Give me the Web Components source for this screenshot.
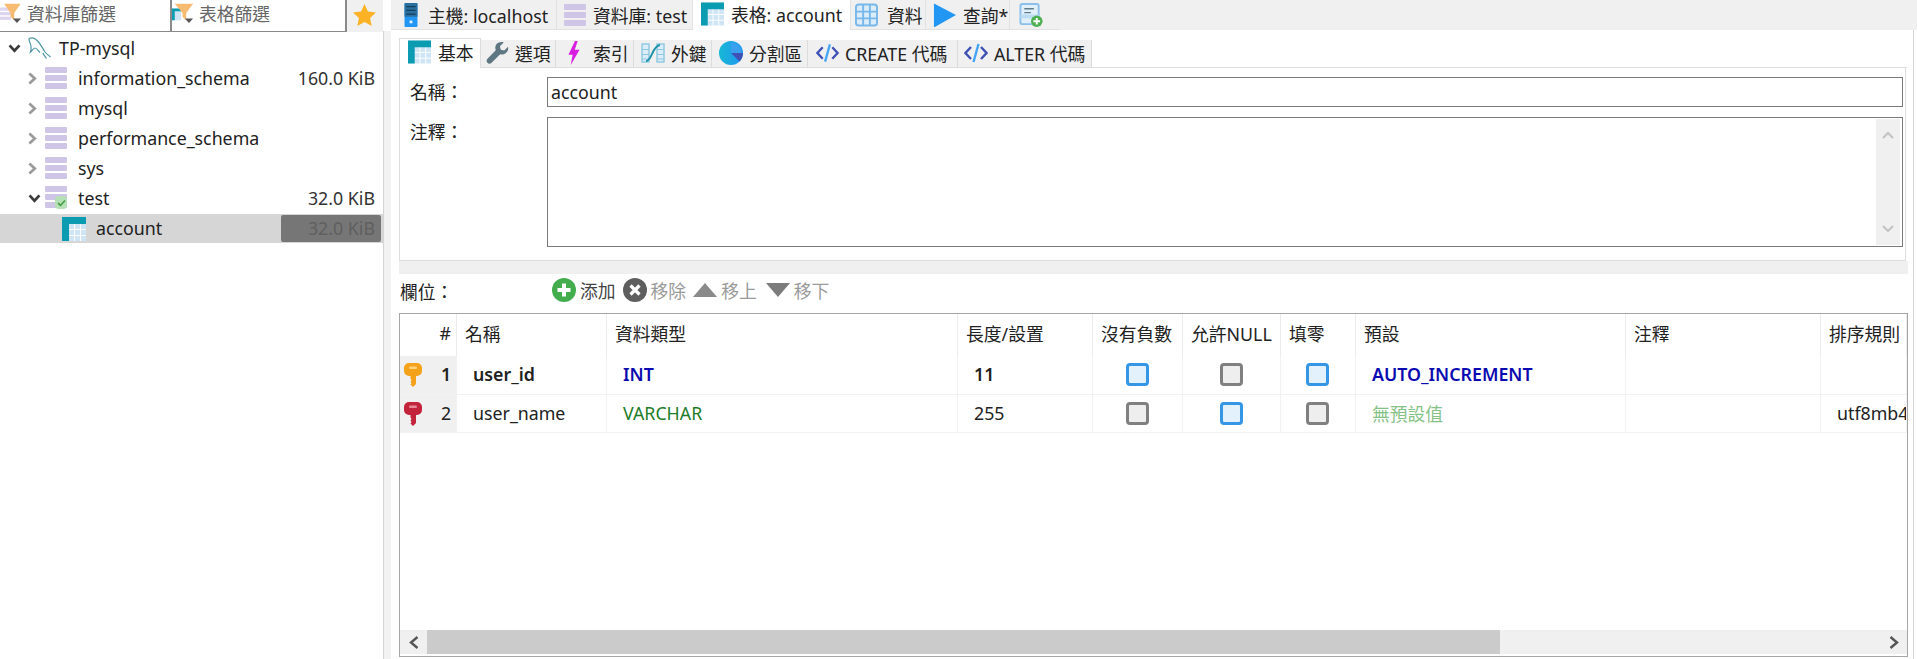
<!DOCTYPE html>
<html lang="zh-Hant">
<head>
<meta charset="utf-8">
<title>HeidiSQL</title>
<style>
    html, body { margin: 0; height: 100%; overflow: hidden; background: #fff; }
    body {
        font: 17.8px "Noto Sans", "Noto Sans CJK TC", sans-serif;
        color: #222;
    }
</style>
</head>
<body>
<app-shell>
    <side-panel slot="side">
        <filter-tab slot="tabs" icon="filterDb" style="--w:172px">資料庫篩選</filter-tab>
        <filter-tab slot="tabs" icon="filterTable" style="--w:175px">表格篩選</filter-tab>
        <tree-row chevron="open" icon="dolphin" level="0">TP-mysql</tree-row>
        <tree-row chevron="closed" icon="db" level="1" size="160.0 KiB">information_schema</tree-row>
        <tree-row chevron="closed" icon="db" level="1">mysql</tree-row>
        <tree-row chevron="closed" icon="db" level="1">performance_schema</tree-row>
        <tree-row chevron="closed" icon="db" level="1">sys</tree-row>
        <tree-row chevron="open" icon="dbCheck" level="1" size="32.0 KiB">test</tree-row>
        <tree-row icon="table" level="2" size="32.0 KiB" selected>account</tree-row>
    </side-panel>
    <main-panel slot="main">
        <tab-item slot="tabs" icon="server" style="--w:166px;--pad:13px;--gap:10px;--iw:14px">主機: localhost</tab-item>
        <tab-item slot="tabs" icon="db" style="--w:136px;--pad:7px;--gap:7px;--iw:22px">資料庫: test</tab-item>
        <tab-item slot="tabs" icon="table" active style="--w:158px;--pad:8px;--gap:7px;--iw:23px">表格: account</tab-item>
        <tab-item slot="tabs" icon="grid" style="--w:75px;--pad:4px;--gap:9px;--iw:23px">資料</tab-item>
        <tab-item slot="tabs" icon="play" style="--w:84px;--pad:7px;--gap:7px;--iw:23px">查詢*</tab-item>
        <tab-item slot="tabs" icon="queryAdd" plain style="--w:50px;--pad:9px;--gap:0px;--iw:24px"></tab-item>

        <tab-item slot="subtabs" icon="table" active sub style="--w:82px;--pad:8px;--gap:7px;--iw:23px">基本</tab-item>
        <tab-item slot="subtabs" icon="wrench" sub style="--w:75px;--pad:5px;--gap:6px;--iw:23px">選項</tab-item>
        <tab-item slot="subtabs" icon="bolt" sub style="--w:78px;--pad:12px;--gap:13px;--iw:12px">索引</tab-item>
        <tab-item slot="subtabs" icon="foreign" sub style="--w:78px;--pad:7px;--gap:6px;--iw:24px">外鍵</tab-item>
        <tab-item slot="subtabs" icon="pie" sub style="--w:96px;--pad:7px;--gap:6px;--iw:24px">分割區</tab-item>
        <tab-item slot="subtabs" icon="code" sub style="--w:150px;--pad:8px;--gap:6px;--iw:23px">CREATE 代碼</tab-item>
        <tab-item slot="subtabs" icon="code" sub style="--w:134px;--pad:6px;--gap:6px;--iw:24px">ALTER 代碼</tab-item>

        <table-form slot="form" name="account"></table-form>

        <field-toolbar slot="toolbar"></field-toolbar>
        <field-grid slot="grid"></field-grid>
    </main-panel>
</app-shell>

<script>
// 圖示
const ICONS = {
    db: `<svg viewBox="0 0 22 22"><g fill="#cfc5e6"><rect width="22" height="6" rx="1"/><rect y="8" width="22" height="6" rx="1"/><rect y="16" width="22" height="6" rx="1"/></g></svg>`,
    dbCheck: `<svg viewBox="0 0 22 24"><g fill="#cfc5e6"><rect width="22" height="6" rx="1"/><rect y="8" width="22" height="6" rx="1"/><rect y="16" width="22" height="6" rx="1"/></g><rect x="10" y="10" width="12" height="13" rx="4" fill="#b5e0b5"/><path d="M13 17l2.4 2.4L20 14.5" fill="none" stroke="#3f9a3f" stroke-width="1.5"/></svg>`,
    table: `<svg viewBox="0 0 24 24"><rect width="24" height="24" fill="#cfe5f5"/><path d="M12.5 7v17M18.5 7v17M7 12.5h17M7 18.5h17" stroke="#fff" stroke-width="1"/><path d="M0 0h24v7H7v17H0z" fill="#0b9cb2"/></svg>`,
    grid: `<svg viewBox="0 0 24 24"><rect x="1" y="1" width="22" height="22" rx="3" fill="#dcedfa" stroke="#78b7ea" stroke-width="2"/><path d="M8.5 1v22M15.5 1v22M1 8.5h22M1 15.5h22" stroke="#78b7ea" stroke-width="2"/></svg>`,
    server: `<svg viewBox="0 0 14 26"><rect width="14" height="26" rx="1" fill="#2196f3"/><path d="M0 1a1 1 0 0 1 1-1h12a1 1 0 0 1 1 1v14H0z" fill="#2b6f9f"/><path d="M2 4h10M2 8h10M2 12h10" stroke="#123f5c" stroke-width="1.4"/><rect x="5.500" y="19" width="3" height="3" fill="#e3f2fd"/></svg>`,
    play: `<svg viewBox="0 0 24 24"><path d="M1 0l23 12L1 25z" fill="#2196f3"/></svg>`,
    queryAdd: `<svg viewBox="0 0 24 25"><rect x="1" y="1" width="19" height="21" rx="2" fill="#e0effa" stroke="#8cc0ea" stroke-width="2"/><path d="M5 6h10M5 10h7" stroke="#607d8b" stroke-width="1.4"/><path d="M1 14h19" stroke="#bcdcf4" stroke-width="4"/><circle cx="18" cy="19" r="6" fill="#4caf50"/><path d="M18 15.5v7M14.5 19h7" stroke="#fff" stroke-width="2"/></svg>`,
    wrench: `<svg viewBox="0 0 24 24"><path d="M23 5.500l-4 4-3.500-1-1-3.500 4-4c-3-1-6.500 0-8 2.500-1 1.800-1 3.800-.3 5.500L1.500 18c-1.200 1.200-1.200 3 0 4.200s3.100 1.200 4.300 0l9-9c2 .6 4 .3 5.700-1 2.300-1.800 3.300-4.300 2.500-6.700z" fill="#5f7783"/></svg>`,
    bolt: `<svg viewBox="0 0 12 26"><path d="M7 0L0 15h4.500L2.500 26 12 9.500H6.800L10 0z" fill="#d81fe0"/></svg>`,
    foreign: `<svg viewBox="0 0 24 24"><g fill="#dcecf8" stroke="#8cc8e0" stroke-width="1.400"><rect x="1" y="3" width="7" height="18"/><rect x="16" y="3" width="7" height="18"/></g><path d="M1 8.500h7M1 13.500h7M1 18h7M16 8.500h7M16 13.500h7M16 18h7" stroke="#8cc8e0"/><path d="M5 20C11 20 11 5 19 4" fill="none" stroke="#1d93a8" stroke-width="2"/></svg>`,
    pie: `<svg viewBox="0 0 24 24"><defs><linearGradient id="pg" x1="0" y1="0" x2="1" y2="0"><stop offset="0" stop-color="#16b8d4"/><stop offset="1" stop-color="#2196f3"/></linearGradient></defs><circle cx="12" cy="12" r="12" fill="url(#pg)"/><path d="M12 12V1.500A10.500 10.500 0 0 1 22.500 12z" fill="#3aa0ee"/><path d="M12 12h12a12 12 0 0 1-3.500 8.500z" fill="#3f51b5"/></svg>`,
    code: `<svg viewBox="0 0 24 20" fill="none" stroke-width="2.400"><path d="M7 4L1.500 10 7 16" stroke="#3f51b5"/><path d="M17 4l5.500 6-5.500 6" stroke="#3f51b5"/><path d="M14.500 1L9.500 19" stroke="#42a5f5"/></svg>`,
    add: `<svg viewBox="0 0 24 24"><circle cx="12" cy="12" r="12" fill="#43ad4e"/><path d="M12 5.500v13M5.500 12h13" stroke="#fff" stroke-width="4"/></svg>`,
    remove: `<svg viewBox="0 0 24 24"><circle cx="12" cy="12" r="12" fill="#5e5e5e"/><path d="M7.500 7.500l9 9M16.500 7.500l-9 9" stroke="#fff" stroke-width="3.200"/></svg>`,
    up: `<svg viewBox="0 0 24 14"><path d="M12 0l12 14H0z" fill="#8a8a8a"/></svg>`,
    down: `<svg viewBox="0 0 24 14"><path d="M0 0h24L12 14z" fill="#7c7c7c"/></svg>`,
    keyGold: `<svg viewBox="0 0 18 24"><path d="M5 0h8a5 5 0 0 1 5 5v3a5 5 0 0 1-5 5h-1v8l-3 3-2.500-2.500 1-1.500-1-1.500 1-1.500-1-1.500V13H5a5 5 0 0 1-5-5V5a5 5 0 0 1 5-5z" fill="#f5a21b"/><rect x="5" y="3.500" width="8" height="2.500" rx="1.200" fill="#ffd27a"/></svg>`,
    keyRed: `<svg viewBox="0 0 18 24"><path d="M5 0h8a5 5 0 0 1 5 5v3a5 5 0 0 1-5 5h-1v8l-3 3-2.500-2.500 1-1.500-1-1.500 1-1.500-1-1.500V13H5a5 5 0 0 1-5-5V5a5 5 0 0 1 5-5z" fill="#c2243b"/><rect x="5" y="3.500" width="8" height="2.500" rx="1.200" fill="#e8899a"/></svg>`,
    star: `<svg viewBox="0 0 24 23"><path d="M12 0l3.600 7.800 8.400 1-6.200 5.800 1.700 8.400L12 18.800 4.500 23l1.700-8.400L0 8.800l8.400-1z" fill="#fbb224"/></svg>`,
    dolphin: `<svg viewBox="0 0 24 22" fill="none" stroke="#4f97a6" stroke-width="1.200"><path d="M1 1.500c3.500-1.500 7 .5 9.500 3.500 2.800 3.500 4.500 7 6.500 10 1.500 2 3.500 3 5.500 5"/><path d="M1 1.500c0 3 1.500 5 2 7.500.3 2 .2 3.500-.5 6 1.500-1.500 3-4 4.500-4 1.800 0 3 2.500 5 4.500"/><path d="M15 16c.5 2 2 3.500 3.500 5.500"/></svg>`,
    filterDb: `<svg viewBox="0 0 24 26"><g fill="#dcd4ee"><rect y="7" width="12" height="3.500"/><rect y="12" width="12" height="3.500"/><rect y="17" width="12" height="3.500"/></g><path d="M4.500 3h18L15.500 13v8L11.500 17V13z" fill="#f8bb72"/><path d="M14 19h9l-4.500 5z" fill="#555"/></svg>`,
    filterTable: `<svg viewBox="0 0 24 26"><rect y="8" width="10" height="13" fill="#cfe5f5"/><path d="M0 8h10v3H3v10H0z" fill="#0b9cb2"/><path d="M3 3h20L15.500 13v8L11.500 17V13z" fill="#f8bb72"/><path d="M14 19h9l-4.500 5z" fill="#555"/></svg>`,
    chevronOpen: `<svg viewBox="0 0 14 10"><path d="M1.500 1.500L7 7.500l5.500-6" fill="none" stroke="#3c3c3c" stroke-width="3"/></svg>`,
    chevronClosed: `<svg viewBox="0 0 10 14"><path d="M1.500 1.500L7.500 7l-6 5.500" fill="none" stroke="#9a9a9a" stroke-width="3"/></svg>`
};

function icon(name) {
    return ICONS[name] || '';
}

// 頁面外框
class AppShell extends HTMLElement {
    constructor() {
        super();
        this.attachShadow({ mode: 'open' });
        this.shadowRoot.innerHTML = `
            <style>
                :host { display: flex; height: 659px; width: 1917px; }
                .split { width: 7px; flex-shrink: 0; background: #f2f2f2; border-left: 1px solid #d4d4d4; margin-top: 31px; }
                ::slotted([slot="side"]) { width: 383px; flex-shrink: 0; }
                ::slotted([slot="main"]) { flex: 1; min-width: 0; }
            </style>
            <slot name="side"></slot>
            <div class="split"></div>
            <slot name="main"></slot>
        `;
    }
}

// 左側面板
class SidePanel extends HTMLElement {
    constructor() {
        super();
        this.attachShadow({ mode: 'open' });
        this.shadowRoot.innerHTML = `
            <style>
                :host { display: flex; flex-direction: column; }
                .tabs { display: flex; height: 32px; }
                .tabs slot { display: flex; }
                .star { flex: 1; background: #f0f0f0; padding: 4px 0 0 6px; box-sizing: border-box; }
                .star svg { width: 23px; height: 22px; display: block; }
                .tree { padding-top: 1px; }
            </style>
            <div class="tabs">
                <slot name="tabs"></slot>
                <div class="star">${icon('star')}</div>
            </div>
            <div class="tree"><slot></slot></div>
        `;
    }
}

class FilterTab extends HTMLElement {
    constructor() {
        super();
        this.attachShadow({ mode: 'open' });
    }

    connectedCallback() {
        this.shadowRoot.innerHTML = `
            <style>
                :host {
                    display: flex;
                    align-items: center;
                    gap: 5px;
                    width: var(--w);
                    height: 32px;
                    box-sizing: border-box;
                    border-right: 2px solid #8a8a8a;
                    border-bottom: 1px solid #8a8a8a;
                    color: #666;
                    padding-bottom: 6px;
                }
                svg { width: 22px; height: 24px; flex-shrink: 0; }
            </style>
            ${icon(this.getAttribute('icon'))}<slot></slot>
        `;
    }
}

class TreeRow extends HTMLElement {
    constructor() {
        super();
        this.attachShadow({ mode: 'open' });
    }

    connectedCallback() {
        const level = Number(this.getAttribute('level'));
        const chevron = this.getAttribute('chevron');
        const size = this.getAttribute('size');
        const name = this.getAttribute('icon');
        const isSelected = this.hasAttribute('selected');
        const left = [8, 28, 62][level];
        const textGap = [7, 11, 10][level];
        const iconSize = { dolphin: [24, 22], db: [22, 22], dbCheck: [22, 24], table: [24, 24] }[name];
        let chevronHtml = '';
        if (chevron === 'open') {
            chevronHtml = `<span class="chev" style="width:${level ? 17 : 20}px">${icon('chevronOpen')}</span>`;
        } else if (chevron === 'closed') {
            chevronHtml = `<span class="chev closed" style="width:17px">${icon('chevronClosed')}</span>`;
        }

        this.shadowRoot.innerHTML = `
            <style>
                :host {
                    display: flex;
                    align-items: center;
                    height: 30px;
                    padding-left: ${left}px;
                    padding-right: 8px;
                    box-sizing: border-box;
                    ${isSelected ? 'background: #d6d6d6; padding-right: 2px; height: 29px; margin-top: 1px;' : ''}
                }
                .chev { display: flex; flex-shrink: 0; }
                .chev svg { width: 13px; height: 9px; }
                .chev.closed svg { width: 9px; height: 13px; }
                .ico { display: flex; flex-shrink: 0; margin-right: ${textGap}px; }
                .ico svg { width: ${iconSize[0]}px; height: ${iconSize[1]}px; }
                .name { flex: 1; ${isSelected ? 'padding-bottom: 2px;' : ''} }
                .size { color: #333; }
                .size.sel {
                    width: 100px;
                    height: 27px;
                    line-height: 26px;
                    box-sizing: border-box;
                    text-align: right;
                    padding-right: 6px;
                    background: #767676;
                    color: #5f5f5f;
                    border-radius: 2px;
                }
            </style>
            ${chevronHtml}
            <span class="ico">${icon(name)}</span>
            <span class="name"><slot></slot></span>
            ${size ? `<span class="size ${isSelected ? 'sel' : ''}">${size}</span>` : ''}
        `;
    }
}

// 右側面板
class MainPanel extends HTMLElement {
    constructor() {
        super();
        this.attachShadow({ mode: 'open' });
        this.shadowRoot.innerHTML = `
            <style>
                :host { display: flex; flex-direction: column; height: 659px; }
                .tabs { display: flex; height: 30px; background: #f0f0f0; flex-shrink: 0; }
                .body {
                    flex: 1;
                    min-height: 0;
                    display: flex;
                    flex-direction: column;
                    padding: 8px 6px 2px 8px;
                    margin-right: 3px;
                    border-right: 1px solid #d4d4d4;
                }
                .subtabs { display: flex; height: 30px; flex-shrink: 0; align-items: flex-end; }
                .fill { flex: 1; border-bottom: 1px solid #ddd; align-self: stretch; }
                ::slotted([slot="grid"]) { flex: 1; min-height: 0; }
            </style>
            <div class="tabs"><slot name="tabs"></slot></div>
            <div class="body">
                <div class="subtabs"><slot name="subtabs"></slot><div class="fill"></div></div>
                <slot name="form"></slot>
                <slot name="toolbar"></slot>
                <slot name="grid"></slot>
            </div>
        `;
    }
}

class TabItem extends HTMLElement {
    constructor() {
        super();
        this.attachShadow({ mode: 'open' });
    }

    connectedCallback() {
        const isActive = this.hasAttribute('active');
        const isSub = this.hasAttribute('sub');
        const isPlain = this.hasAttribute('plain');
        let skin = `border-right: 1px solid ${isSub ? '#dcdcdc' : '#e2e2e2'};`;
        if (isSub) {
            skin += isActive
                ? 'height: 30px; background: #fff; border: 1px solid #ddd; border-bottom: 0; padding-bottom: 4px;'
                : 'height: 28px; background: #f0f0f0; border-bottom: 1px solid #ddd; padding-bottom: 1px;';
        } else {
            skin += isActive ? 'height: 30px; background: #fff; padding-bottom: 3px;' : 'height: 30px; border-bottom: 1px solid #e2e2e2;';
        }
        if (isPlain) skin = 'height: 30px; border-bottom: 1px solid #e2e2e2;';

        this.shadowRoot.innerHTML = `
            <style>
                :host {
                    display: flex;
                    align-items: center;
                    flex-shrink: 0;
                    width: var(--w);
                    gap: var(--gap);
                    padding-left: var(--pad);
                    box-sizing: border-box;
                    white-space: nowrap;
                    ${skin}
                }
                svg { width: var(--iw); height: 24px; flex-shrink: 0; display: block; }
            </style>
            ${icon(this.getAttribute('icon'))}<slot></slot>
        `;
    }
}

class TableForm extends HTMLElement {
    constructor() {
        super();
        this.attachShadow({ mode: 'open' });
    }

    connectedCallback() {
        this.shadowRoot.innerHTML = `
            <style>
                :host { display: block; width: 1509px; flex-shrink: 0; }
                .panel {
                    display: grid;
                    grid-template-columns: 137px 1fr;
                    row-gap: 10px;
                    padding: 9px 2px 13px 10px;
                    border: 1px solid #ddd;
                    border-top: 0;
                    width: 1507px;
                    box-sizing: border-box;
                }
                .label { line-height: 30px; }
                .input {
                    height: 30px;
                    line-height: 28px;
                    box-sizing: border-box;
                    border: 1px solid #7a7a7a;
                    padding-left: 3px;
                }
                .area {
                    height: 130px;
                    box-sizing: border-box;
                    border: 1px solid #7a7a7a;
                    display: flex;
                    justify-content: flex-end;
                    padding: 1px 2px 1px 0;
                }
                .vscroll {
                    width: 24px;
                    background: #f0f0f0;
                    display: flex;
                    flex-direction: column;
                    justify-content: space-between;
                    align-items: center;
                    padding: 12px 0;
                    box-sizing: border-box;
                }
                .vscroll svg { width: 12px; height: 8px; display: block; }
                .band { height: 13px; background: #f0f0f0; }
            </style>
            <div class="panel">
                <div class="label">名稱：</div>
                <div class="input">${this.getAttribute('name')}</div>
                <div class="label">注釋：</div>
                <div class="area">
                    <div class="vscroll">
                        <svg viewBox="0 0 12 8"><path d="M1 7l5-5 5 5" fill="none" stroke="#c4c4c4" stroke-width="2.200"/></svg>
                        <svg viewBox="0 0 12 8"><path d="M1 1l5 5 5-5" fill="none" stroke="#c4c4c4" stroke-width="2.200"/></svg>
                    </div>
                </div>
            </div>
            <div class="band"></div>
        `;
    }
}

class FieldToolbar extends HTMLElement {
    constructor() {
        super();
        this.attachShadow({ mode: 'open' });
    }

    connectedCallback() {
        this.shadowRoot.innerHTML = `
            <style>
                :host { display: flex; align-items: center; height: 39px; box-sizing: border-box; flex-shrink: 0; padding: 0 0 8px 1px; }
                .label { width: 152px; padding-top: 3px; }
                .item { display: flex; align-items: center; gap: 4px; margin-right: 7px; color: #9a9a9a; }
                .item.on { color: #444; }
                .item svg { width: 24px; height: 24px; display: block; }
                .item svg.tri { height: 14px; }
            </style>
            <div class="label">欄位：</div>
            <div class="item on">${icon('add')}<span>添加</span></div>
            <div class="item">${icon('remove')}<span>移除</span></div>
            <div class="item" style="margin-right:9px">${icon('up').replace('<svg', '<svg class="tri"')}<span>移上</span></div>
            <div class="item">${icon('down').replace('<svg', '<svg class="tri"')}<span>移下</span></div>
        `;
    }
}

class CheckBox extends HTMLElement {
    constructor() {
        super();
        this.attachShadow({ mode: 'open' });
        this.shadowRoot.innerHTML = `
            <style>
                :host {
                    display: block;
                    width: 23px;
                    height: 23px;
                    box-sizing: border-box;
                    border: 3px solid #808080;
                    border-radius: 4px;
                    background: #eeeeee;
                }
                :host([checked]) { border-color: #3596e6; background: #e2f1fc; }
            </style>
        `;
    }
}

// 欄位表格
const COLUMNS = ['#', '名稱', '資料類型', '長度/設置', '沒有負數', '允許NULL', '填零', '預設', '注釋', '排序規則'];
const FIELDS = [
    { no: 1, key: 'keyGold', name: 'user_id', type: 'INT', len: '11', flags: [true, false, true], def: 'AUTO_INCREMENT', collation: '', bold: true, typeColor: '#0a0ab0', defColor: '#0a0ab0' },
    { no: 2, key: 'keyRed', name: 'user_name', type: 'VARCHAR', len: '255', flags: [false, true, false], def: '無預設值', collation: 'utf8mb4', bold: false, typeColor: '#1f7d2a', defColor: '#86c286' }
];

class FieldGrid extends HTMLElement {
    constructor() {
        super();
        this.attachShadow({ mode: 'open' });
    }

    connectedCallback() {
        const head = COLUMNS.map((c, i) => `<div class="th ${i === 0 ? 'no' : ''}">${c}</div>`).join('');
        const rows = FIELDS.map(f => `
            <div class="row ${f.bold ? 'bold' : ''}" style="height:${f.no === 1 ? 39 : 38}px">
                <div class="td idx">${icon(f.key)}<span>${f.no}</span></div>
                <div class="td text">${f.name}</div>
                <div class="td text" style="color:${f.typeColor}">${f.type}</div>
                <div class="td text">${f.len}</div>
                ${f.flags.map(on => `<div class="td chk"><check-box ${on ? 'checked' : ''}></check-box></div>`).join('')}
                <div class="td text" style="color:${f.defColor}">${f.def}</div>
                <div class="td"></div>
                <div class="td text">${f.collation}</div>
            </div>
        `).join('');

        this.shadowRoot.innerHTML = `
            <style>
                :host {
                    display: flex;
                    flex-direction: column;
                    width: 1509px;
                    box-sizing: border-box;
                    border: 1px solid #a6a6a6;
                    overflow: hidden;
                    --cols: 57px 150px 351px 135px 90px 98px 75px 270px 195px 86px;
                }
                .row, .head { display: grid; grid-template-columns: var(--cols); flex-shrink: 0; }
                .head { height: 42px; }
                .th {
                    display: flex;
                    align-items: center;
                    padding: 0 0 4px 8px;
                    border-right: 1px solid #ececec;
                    white-space: nowrap;
                    overflow: hidden;
                }
                .th.no { justify-content: flex-end; padding-right: 5px; }
                .row { border-bottom: 1px solid #f2f2f2; box-sizing: border-box; }
                .bold .td { font-weight: 600; }
                .td {
                    display: flex;
                    align-items: center;
                    padding-bottom: 0;
                    border-right: 1px solid #f2f2f2;
                    white-space: nowrap;
                    overflow: hidden;
                    min-width: 0;
                }
                .td.text { padding: 0 0 2px 16px; }
                .td.idx { background: #f0f0f0; padding-left: 4px; gap: 19px; }
                .td.idx span { padding-bottom: 2px; }
                .td.idx svg { width: 18px; height: 24px; flex-shrink: 0; }
                .td.chk { justify-content: center; padding-right: 1px; padding-bottom: 1px; }
                .spacer { flex: 1; }
                .hscroll {
                    display: flex;
                    height: 24px;
                    margin-bottom: 2px;
                    background: #f0f0f0;
                    flex-shrink: 0;
                }
                .btn { display: flex; align-items: center; justify-content: center; width: 27px; flex-shrink: 0; }
                .btn svg { width: 10px; height: 13px; display: block; }
                .thumb { width: 1073px; background: #cbcbcb; flex-shrink: 0; }
                .track { flex: 1; }
            </style>
            <div class="head">${head}</div>
            ${rows}
            <div class="spacer"></div>
            <div class="hscroll">
                <div class="btn"><svg viewBox="0 0 10 13"><path d="M8.500 1L2 6.500 8.500 12" fill="none" stroke="#555" stroke-width="2.400"/></svg></div>
                <div class="thumb"></div>
                <div class="track"></div>
                <div class="btn"><svg viewBox="0 0 10 13"><path d="M1.500 1L8 6.500 1.500 12" fill="none" stroke="#555" stroke-width="2.400"/></svg></div>
            </div>
        `;
    }
}

customElements.define('app-shell', AppShell);
customElements.define('side-panel', SidePanel);
customElements.define('filter-tab', FilterTab);
customElements.define('tree-row', TreeRow);
customElements.define('main-panel', MainPanel);
customElements.define('tab-item', TabItem);
customElements.define('table-form', TableForm);
customElements.define('field-toolbar', FieldToolbar);
customElements.define('check-box', CheckBox);
customElements.define('field-grid', FieldGrid);
</script>
</body>
</html>
